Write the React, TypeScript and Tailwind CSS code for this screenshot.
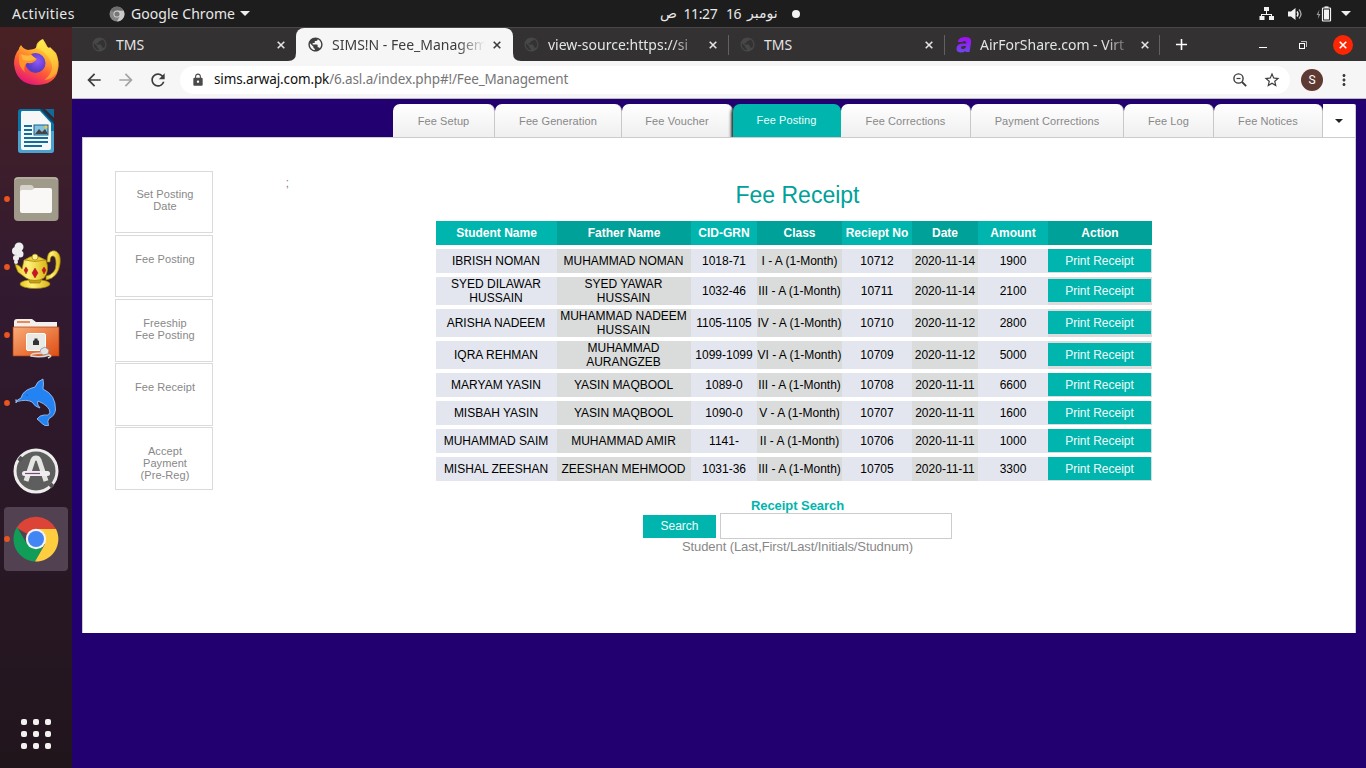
import React from "react";
import {
  MdPublic, MdArrowBack, MdArrowForward, MdRefresh, MdLock,
  MdStarBorder, MdMoreVert, MdAdd,
} from "react-icons/md";

const UI = "font-['Noto_Sans',sans-serif]";

function TopBar() {
  return (
    <header className="flex h-[27px] shrink-0 items-center bg-[#1d1d1d] text-[14px] text-[#e8e8e8]">
      <span className="w-[97px] pl-3 tracking-[0.45px]">Activities</span>
      <svg className="ml-3 h-4 w-4" viewBox="0 0 16 16">
        <circle cx="8" cy="8" r="7.5" fill="#858585" />
        <path d="M8 4.5h6.6A7.5 7.5 0 0 1 8 15.5l3-5.5z" fill="#c9c9c9" />
        <path d="M1.5 4.3A7.5 7.5 0 0 1 14.5 4.5H8L4.8 6z" fill="#6d6d6d" />
        <circle cx="8" cy="8" r="3.5" fill="#d8d8d8" />
        <circle cx="8" cy="8" r="2.6" fill="#777" />
      </svg>
      <span className="ml-1.5 w-[104px] whitespace-nowrap tracking-[0.05px]">Google Chrome</span>
      <svg className="ml-[5px] h-[5px] w-[10px]" viewBox="0 0 10 5"><path d="M0 0h10L5 5z" fill="#eee" /></svg>
      <div className="ml-[410px] flex w-[140px] items-center">
        <span className="w-[23.500px] font-['DejaVu_Sans',sans-serif] text-[14px]">ص</span>
        <span className="w-[42.500px] whitespace-nowrap tracking-[-0.4px]">11:27</span>
        <span className="w-[21px] tracking-[-0.5px]">16</span>
        <span className="w-[45px] whitespace-nowrap font-['DejaVu_Sans',sans-serif] text-[14px]">نومبر</span>
        <span className="h-2 w-2 shrink-0 rounded-full bg-[#f2f2f2]" />
      </div>
      <div className="ml-auto flex items-center pr-[15px]">
        <svg className="h-[14px] w-4" viewBox="0 0 16 14" fill="#f2f2f2">
          <rect x="5" y="0" width="5" height="4" /><rect x="0.5" y="9" width="5" height="4" /><rect x="10" y="9" width="5" height="4" />
          <path d="M7 4h1v3h5v2h-1V8H3v1H2V7h5z" />
        </svg>
        <svg className="ml-[13px] h-[14px] w-4" viewBox="0 0 16 14">
          <path d="M0 4.500h3L7.500 1v12L3 9.500H0z" fill="#f2f2f2" />
          <path d="M9 4.500q2 2.500 0 5" stroke="#f2f2f2" strokeWidth="1.400" fill="none" />
          <path d="M11 2.500q4 4.500 0 9" stroke="#aaa" strokeWidth="1.300" fill="none" />
        </svg>
        <svg className="ml-3 h-4 w-4" viewBox="0 0 16 16">
          <path d="M3.500 3.500L0.500 9h2L1.800 13L4.500 8h-2z" fill="#999" />
          <rect x="6.500" y="2" width="8" height="13" fill="none" stroke="#f2f2f2" strokeWidth="1.200" rx="0.500" />
          <rect x="8.500" y="0.400" width="4" height="1.600" fill="#f2f2f2" /><rect x="8" y="3.500" width="5" height="10" fill="#f2f2f2" />
        </svg>
        <svg className="ml-[9px] h-[5px] w-[10px]" viewBox="0 0 10 5"><path d="M0 0h10L5 5z" fill="#eee" /></svg>
      </div>
    </header>
  );
}

const dockSvg = "h-16 w-[72px] shrink-0";
const Running = () => <circle cx="7" cy="32" r="2.900" fill="#e95420" />;

function Dock() {
  return (
    <aside className="flex w-[72px] shrink-0 flex-col gap-1 bg-linear-to-b from-[#492124] via-[#321a30] via-35% to-[#21151c] pt-1">
      <svg className={dockSvg} viewBox="0 0 72 64">
        <defs>
          <linearGradient id="fx" x1="0.800" y1="0" x2="0.300" y2="1"><stop offset="0" stopColor="#fff44f" /><stop offset=".35" stopColor="#ffb02e" /><stop offset=".65" stopColor="#ff5a36" /><stop offset="1" stopColor="#e4127d" /></linearGradient>
          <radialGradient id="fp" cx=".6" cy=".4"><stop offset="0" stopColor="#9059ff" /><stop offset="1" stopColor="#5b3bc4" /></radialGradient>
          <linearGradient id="fy" x1="0" y1="0" x2="0" y2="1"><stop offset="0" stopColor="#fff44f" /><stop offset="1" stopColor="#ffa22e" /></linearGradient>
        </defs>
        <path d="M19 17l2-3q2 4 7 5l6-1 3-2q1-5 6-8l3 5q1 3 3 4l1-1 3 3 3 3q4 9 2 17-3 15-22 15-20-1-22-21 0-9 5-15z" fill="url(#fx)" />
        <path d="M36 17q0-6 6.500-9 0 5 5 8 14 10 9 26-4 6-12 7 14-12 2-25-3-4-10.500-7z" fill="url(#fy)" opacity=".85" />
        <circle cx="35.500" cy="32" r="10" fill="url(#fp)" />
        <path d="M19 23q6 2 12 0 2 3 6 5-3 5-10 4l-2 2q-2 5 1 8-7-5-7-13z" fill="#ff922a" />
        <path d="M21 23q6 3 10 1l5 4q-5 3-13 1z" fill="#ffb83d" />
      </svg>
      <svg className={dockSvg} viewBox="0 0 72 64">
        <path d="M21 10h20l13 13v28q0 3-3 3H21q-3 0-3-3V13q0-3 3-3z" fill="#0c75a8" />
        <path d="M18 32h36v19q0 3-3 3H21q-3 0-3-3z" fill="#4ba3d0" />
        <path d="M22 12h18l11 12v25q0 2-2 2H23q-2 0-2-2V14q0-2 1-2z" fill="#f7f7f7" />
        <path d="M45 10h9v9z" fill="#126a9b" /><path d="M40 10l14 15v-3L43 10z" fill="#0b425f" />
        <path d="M24 27h8M24 31h8M24 35h8M24 39h24M24 43h24M24 47h18" stroke="#116f9f" strokeWidth="1.800" />
        <rect x="34" y="26" width="14" height="10" fill="#85c2df" stroke="#10658f" /><path d="M35 35l4-5 3 3 3-3 3 5z" fill="#444" /><circle cx="46" cy="28" r="1.500" fill="#fcc32d" />
      </svg>
      <svg className={dockSvg} viewBox="0 0 72 64">
        <rect x="14" y="10" width="44.500" height="44" rx="4" fill="#9f9a89" /><path d="M15 13q0-2 3-2h37q2 0 2 2" stroke="#c3beb0" fill="none" />
        <path d="M20 21q0-3 2-3h9q2 0 3 3h1v9H20z" fill="#d5d2c8" /><path d="M22 23h10l3-2h15q2 0 2 2v21q0 2-2 2H22q-2 0-2-2V25q0-2 2-2z" fill="#f9f8f6" />
        <Running />
      </svg>
      <svg className={dockSvg} viewBox="0 0 72 64">
        <defs><linearGradient id="gold"><stop offset="0" stopColor="#e6c91b" /><stop offset=".4" stopColor="#fff17a" /><stop offset="1" stopColor="#dbb513" /></linearGradient></defs>
        <g stroke="#9b7b0b" strokeWidth=".7">
          <path d="M47 27q0-8 3-10 5-3 8 1 3 3 2 11-2 14-14 16v-4q10-2 10-12 0-9-4-8-2 1-2 6z" fill="url(#gold)" />
          <ellipse cx="35" cy="49" rx="15" ry="4.500" fill="url(#gold)" /><path d="M27 41h16l-3 7h-10z" fill="#c79f15" />
          <path d="M15 29q5 1 7 5l2-9q10-5 22 0 4 11-2 18-9 5-18 0l-8-6q-2-4-3-8z" fill="url(#gold)" />
          <path d="M25 25q9-8 20 0-10 3-20 0z" fill="#ebcf3a" /><circle cx="35" cy="22" r="3" fill="#fff18c" />
        </g>
        <path d="M35 33l3 5-3 5-3-5zM26 32l2 3-2 4-2-4zM44 32l2 3-2 4-2-4z" fill="#cf1028" stroke="#7d1315" strokeWidth=".4" />
        <g fill="#eee"><circle cx="19" cy="12" r="4.500" /><circle cx="16" cy="16" r="4" /><circle cx="20" cy="19" r="3.500" /><circle cx="16" cy="23" r="3" /><circle cx="16" cy="27" r="2" /></g>
        <Running />
      </svg>
      <svg className={dockSvg} viewBox="0 0 72 64">
        <defs><linearGradient id="of" x2="1" y2="1"><stop offset="0" stopColor="#f8ad79" /><stop offset="1" stopColor="#df4d12" /></linearGradient></defs>
        <path d="M14 24v-5q0-3 3-3h15l4 3h21v5z" fill="#f2efed" /><path d="M17 19h13" stroke="#e98b55" strokeWidth="2" />
        <rect x="13" y="24" width="46" height="29" fill="url(#of)" stroke="#ae3a0b" strokeWidth=".7" />
        <rect x="26.500" y="30.500" width="19" height="17" rx="1.500" fill="#e9e9e6" stroke="#fff" /><path d="M33 42v-4l1.500-1v-1.500h3V37l1.500 1v4z" fill="#333" />
        <path d="M41 46l4-2 4 3-1 4-5 1-3-3z" fill="#e3e3e3" stroke="#858585" strokeWidth=".7" />
        <path d="M43 50q-13 0-12 3 10 2 18-1 4 1-1 3" stroke="#d8d8d8" strokeWidth="1.500" fill="none" /><Running />
      </svg>
      <svg className={dockSvg} viewBox="0 0 72 64">
        <path d="M16 32q0-3 5-5 1-5 6-8 4-2 8-3 2-6 8-8 1 5 0 10 13 6 12.500 21-1 6-6.500 8.500-2 2-.5 7-4 1-6.500-2-3-3-5-4.500 3-4 7-4 4 1 6-2 0-7-12-12-1 2 0 4l2 3q-5-1-8-6-5-3-15-.5-1 0-1-2z" fill="#2483f2" stroke="#a8c6f3" strokeWidth=".8" />
        <circle cx="27" cy="24" r=".6" fill="#153d83" /><Running />
      </svg>
      <svg className={dockSvg} viewBox="0 0 72 64">
        <circle cx="36" cy="32" r="21" fill="#5e5e5e" stroke="#ededeb" strokeWidth="3" />
        <path d="M19 22l3-4M50 48l3-3" stroke="#555" strokeWidth="4" />
        <path d="M26 42l7-21q1-2 3-2t3 2l7 21" fill="none" stroke="#e5e5e3" strokeWidth="5" />
        <rect x="22" y="32" width="28" height="5" rx="2.500" fill="#eee" /><path d="M25 34.500h15" stroke="#80477d" strokeWidth="1.200" />
      </svg>
      <svg className={dockSvg} viewBox="0 0 72 64">
        <rect x="4" y="0" width="64" height="64" rx="4" fill="#524251" />
        <path d="M36 32L16.500 20.800A22.500 22.500 0 0 1 56 22H36z" fill="#db4437" />
        <path d="M36 32L27 37 17 20A22.500 22.500 0 0 0 35 54.500L44 38z" fill="#0f9d58" />
        <path d="M36 22h20A22.500 22.500 0 0 1 35 54.500L45 37z" fill="#ffcd40" />
        <circle cx="36" cy="32" r="10.200" fill="#f3f3f3" /><circle cx="36" cy="32" r="8" fill="#4285f4" />
        <Running />
      </svg>
      <div className="mt-auto mb-[19px] grid grid-cols-[6px_6px_6px] justify-center gap-1.5">
        {Array.from({ length: 9 }, (_, i) => <span key={i} className="h-1.5 w-1.5 rounded-[2px] bg-[#f2f1f0]" />)}
      </div>
    </aside>
  );
}

const Cross = ({ cls }: { cls: string }) => (
  <svg className={"shrink-0 " + cls} viewBox="0 0 8 8"><path d="M.7.7l6.600 6.600M7.300.7L.7 7.300" stroke="currentColor" strokeWidth="1.600" /></svg>
);

function BrowserTab({ title, icon, active, sep, faded, size }: { title: string; icon?: React.ReactNode; active?: boolean; sep?: boolean; faded?: boolean; size: string }) {
  return (
    <div className={"flex h-full shrink-0 items-center " + size + (active ? " rounded-t-[8px] bg-[#f6f6f6] text-[#3c3c3c]" : " text-[#e4e4e4]")}>
      <span className="flex w-[17px] shrink-0 justify-center">{icon ?? <MdPublic size={17} color={active ? "#3f3f3f" : "#474747"} />}</span>
      <span className={"ml-[8px] w-[153px] text-[14px] whitespace-nowrap " + (faded ? "mask-r-from-82% mask-r-to-100%" : "")}>{title}</span>
      <Cross cls="ml-[8px] h-2 w-2" />
      {sep && <span className="ml-auto h-5 w-px bg-[#626062]" />}
    </div>
  );
}

function Corner({ flip }: { flip?: boolean }) {
  return (
    <svg className={"absolute bottom-0 h-2 w-2 " + (flip ? "left-[441px] -scale-x-100" : "left-[216px]")} viewBox="0 0 8 8"><path d="M8 0v8H0q8 0 8-8z" fill="#f6f6f6" /></svg>
  );
}

function Browser() {
  return (
    <>
      <div className="relative flex h-[34px] shrink-0 items-center border-t border-[#484647] bg-[#333132] pl-2">
        <Corner /><Corner flip />
        <BrowserTab title="TMS" size="w-[216px] pl-[11px]" />
        <BrowserTab title="SIMS!N - Fee_Managem" active faded size="w-[217px] pl-[11px]" />
        <BrowserTab title="view-source:https://si" sep faded size="w-[216px] pl-[10px]" />
        <BrowserTab title="TMS" sep size="w-[216px] pl-[10px]" />
        <BrowserTab title="AirForShare.com - Virt" sep faded size="w-[215px] pl-[10px]" icon={
          <svg viewBox="0 0 16 17" className="h-[17px] w-4"><defs><linearGradient id="air" x2="0" y2="1"><stop stopColor="#a40bf3" /><stop offset="1" stopColor="#6b49ec" /></linearGradient></defs>
            <path d="M2 5q1-4 8-4 6 0 5 6l-1.500 9H9.500v-1q-2 1.500-5 1.500Q0 16 .5 12 1 7.500 7 7.500h3.500q0-2.500-2-2.500Q7 5 6.500 6H2zM10 10H7q-2 0-2 1.500T7 13q2.500 0 3-3z" fill="url(#air)" /></svg>
        } />
        <MdAdd size={19} color="#fff" className="ml-[12px]" />
        <div className="ml-auto flex items-center pr-[13px] text-white">
          <span className="mt-[5px] h-px w-2 bg-white" />
          <svg className="ml-8 h-2 w-2" viewBox="0 0 8 8" fill="none" stroke="currentColor"><rect x=".5" y="2.500" width="5" height="5" /><path d="M2 .5h5.500V6" opacity=".7" /></svg>
          <span className="ml-[26px] flex h-5 w-5 items-center justify-center rounded-full bg-[#fc2604]"><Cross cls="h-2 w-2" /></span>
        </div>
      </div>
      <div className="flex h-[38px] shrink-0 items-center border-b border-[#b9b8ba] bg-[#f6f6f6] pl-3 text-[#3c3c3c]">
        <MdArrowBack size={20} /><MdArrowForward size={20} className="ml-3" color="#a4a4a4" /><MdRefresh size={20} className="ml-3" />
        <div className="ml-3 flex h-7 w-[1110px] items-center rounded-full bg-white pl-[11px] pr-[9px]">
          <MdLock size={14} color="#4a4a4a" />
          <span className="ml-[9px] text-[13.500px] tracking-[-0.14px] text-[#767676]"><span className="text-[#111]">sims.arwaj.com.pk</span>/6.asl.a/index.php#!/Fee_Management</span>
          <svg className="ml-auto h-[14px] w-[14px]" viewBox="0 0 14 14" fill="none" stroke="currentColor"><circle cx="5.500" cy="5.500" r="4.600" strokeWidth="1.400" /><path d="M9 9l4.200 4.200" strokeWidth="1.800" /><path d="M3.500 5.500h4" strokeWidth="1.200" /></svg>
          <MdStarBorder size={18} className="ml-[16px]" />
        </div>
        <span className="ml-[11px] flex h-[22px] w-[22px] items-center justify-center rounded-full bg-[#5f3a32] font-['Roboto',sans-serif] text-[12px] text-white">S</span>
        <MdMoreVert size={18} className="ml-[12px]" />
      </div>
    </>
  );
}

const tabs = [
  { label: "Fee Setup", w: "w-[102px]" },
  { label: "Fee Generation", w: "w-[127px]" },
  { label: "Fee Voucher", w: "w-[111px]" },
  { label: "Fee Posting", w: "w-[108px]", active: true },
  { label: "Fee Corrections", w: "w-[130px]" },
  { label: "Payment Corrections", w: "w-[153px]" },
  { label: "Fee Log", w: "w-[90px]" },
  { label: "Fee Notices", w: "w-[109px]" },
];

const sideItems = [
  { lines: ["Set Posting", "Date"], box: "h-[62px] mb-[2px] pt-[16px]" },
  { lines: ["Fee Posting"], box: "h-[62px] mb-[2px] pt-[17px]" },
  { lines: ["Freeship", "Fee Posting"], box: "h-[63px] mb-[1px] pt-[17px]" },
  { lines: ["Fee Receipt"], box: "h-[63px] mb-[1px] pt-[17px]" },
  { lines: ["Accept", "Payment", "(Pre-Reg)"], box: "h-[63px] pt-[17px]" },
];

const columns = ["Student Name", "Father Name", "CID-GRN", "Class", "Reciept No", "Date", "Amount", "Action"];
const rows = [
  ["IBRISH NOMAN", "MUHAMMAD NOMAN", "1018-71", "I - A (1-Month)", "10712", "2020-11-14", "1900"],
  ["SYED DILAWAR HUSSAIN", "SYED YAWAR HUSSAIN", "1032-46", "III - A (1-Month)", "10711", "2020-11-14", "2100"],
  ["ARISHA NADEEM", "MUHAMMAD NADEEM HUSSAIN", "1105-1105", "IV - A (1-Month)", "10710", "2020-11-12", "2800"],
  ["IQRA REHMAN", "MUHAMMAD AURANGZEB", "1099-1099", "VI - A (1-Month)", "10709", "2020-11-12", "5000"],
  ["MARYAM YASIN", "YASIN MAQBOOL", "1089-0", "III - A (1-Month)", "10708", "2020-11-11", "6600"],
  ["MISBAH YASIN", "YASIN MAQBOOL", "1090-0", "V - A (1-Month)", "10707", "2020-11-11", "1600"],
  ["MUHAMMAD SAIM", "MUHAMMAD AMIR", "1141-", "II - A (1-Month)", "10706", "2020-11-11", "1000"],
  ["MISHAL ZEESHAN", "ZEESHAN MEHMOOD", "1031-36", "III - A (1-Month)", "10705", "2020-11-11", "3300"],
];
const grid = "grid grid-cols-[121px_134px_66px_85px_70px_66px_70px_104px]";

function ReceiptTable() {
  return (
    <div className="mt-[10px] flex w-[716px] flex-col gap-1 text-[12px] leading-[14px] text-black">
      <div className={grid + " h-6 font-bold text-white"}>
        {columns.map((c, i) => <div key={c} className={"flex items-center justify-center whitespace-nowrap " + (i % 2 ? "bg-[#00a199]" : "bg-[#00b5ad]")}>{c}</div>)}
      </div>
      {rows.map((r, n) => {
        const tall = n > 0 && n < 4;
        return (
          <div key={r[4]} className={grid + (tall ? " h-7" : " h-6")}>
            {r.map((v, i) => (
              <div key={i} className={"flex items-center justify-center text-center " + (i % 2 ? "bg-[#dadcdc] " : "bg-[#e3e6ee] ") + (i > 1 ? "whitespace-nowrap" : "pr-[3px] pl-0.5")}>{v}</div>
            ))}
            <div className={"bg-[#dadcdc] " + (tall ? "pt-0.5" : "")}>
              <button className="block h-[23px] w-[103px] bg-[#00b5ad] text-[#effdfc]">Print Receipt</button>
            </div>
          </div>
        );
      })}
    </div>
  );
}

function Page() {
  return (
    <main className="flex flex-1 flex-col bg-[#220070] pt-[5px] pr-[10px] pl-[10px] font-['Liberation_Sans',Arial,sans-serif]">
      <nav className="flex h-[33px] shrink-0 justify-end text-[11px] tracking-[0.1px] text-[#888]">
        {tabs.map((t) => t.active ? (
          <div key={t.label} className={"flex items-center justify-center rounded-t-[7px] bg-[#00b5ad] pr-px pb-px text-[#eafffd] shadow-[-2px_2px_3px_#333] [clip-path:inset(0_0_0_-5px)] " + t.w}>{t.label}</div>
        ) : (
          <div key={t.label} className={"flex items-center justify-center rounded-t-[7px] border-r border-[#c8c8c8] bg-linear-to-b from-white to-[#efefef] pt-px " + t.w}>{t.label}</div>
        ))}
        <div className="flex w-[33px] items-center justify-center rounded-tr-[2px] border-r border-[#ccc] bg-white pt-px"><svg className="h-1 w-2" viewBox="0 0 8 4"><path d="M0 0h8L4 4z" fill="#222" /></svg></div>
      </nav>
      <section className="flex h-[496px] shrink-0 border border-b-0 border-[#ccc] bg-white">
        <div className="ml-8 w-[98px] shrink-0 pt-[33px]">
          {sideItems.map((s, i) => (
            <div key={i} className={"w-[98px] border border-[#dadada] pl-[2px] text-center text-[11px] leading-3 tracking-[0.08px] text-[#888] " + s.box}>
              {s.lines.map((l) => <div key={l}>{l}</div>)}
            </div>
          ))}
        </div>
        <div className="w-[72px] shrink-0 pt-[37px] text-right text-[13px] leading-4 text-[#888]"><span className="mr-[-4px]">;</span></div>
        <div className="ml-[66px] flex w-[886px] flex-col items-center">
          <h1 className="mt-[41px] ml-[7px] text-[23px] leading-8 text-[#00a199]">Fee Receipt</h1>
          <ReceiptTable />
          <h2 className="mt-[17px] ml-[7px] text-[13px] leading-[15px] font-bold tracking-[-0.05px] text-[#00b5ad]">Receipt Search</h2>
          <div className="ml-[7px] flex items-center gap-1">
            <button className="h-[23px] w-[73px] bg-[#00b5ad] text-[12px] text-[#effdfc]">Search</button>
            <input className="h-[26px] w-[232px] border border-[#ccc] bg-white outline-none" />
          </div>
          <p className="ml-[7px] text-[13px] leading-[15px] tracking-[-0.09px] text-[#888]">Student (Last,First/Last/Initials/Studnum)</p>
        </div>
      </section>
    </main>
  );
}

export default function App() {
  return (
    <div className={"flex h-screen w-screen flex-col overflow-hidden " + UI}>
      <TopBar />
      <div className="flex min-h-0 flex-1">
        <Dock />
        <div className="flex min-w-0 flex-1 flex-col"><Browser /><Page /></div>
      </div>
    </div>
  );
}
